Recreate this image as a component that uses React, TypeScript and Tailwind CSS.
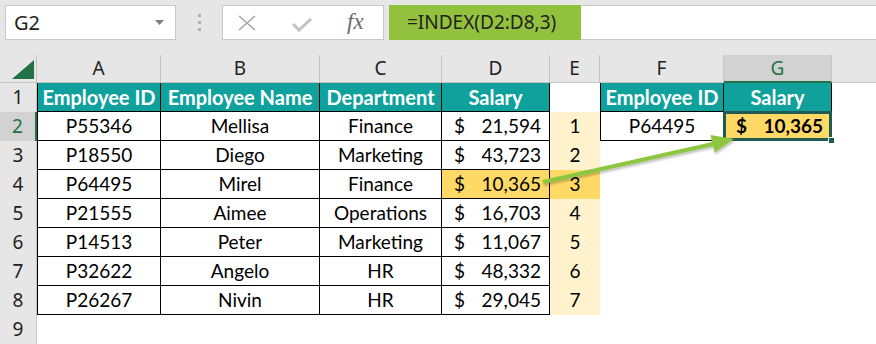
import React from 'react';

const cellFont = "font-['Lato','Liberation_Sans',sans-serif]";
const uiFont = "font-['Noto_Sans','Open_Sans',sans-serif]";

const cols = ['A', 'B', 'C', 'D', 'E', 'F', 'G'];

const rows = [
  { id: 'P55346', name: 'Mellisa', dept: 'Finance', salary: '21,594' },
  { id: 'P18550', name: 'Diego', dept: 'Marketing', salary: '43,723' },
  { id: 'P64495', name: 'Mirel', dept: 'Finance', salary: '10,365' },
  { id: 'P21555', name: 'Aimee', dept: 'Operations', salary: '16,703' },
  { id: 'P14513', name: 'Peter', dept: 'Marketing', salary: '11,067' },
  { id: 'P32622', name: 'Angelo', dept: 'HR', salary: '48,332' },
  { id: 'P26267', name: 'Nivin', dept: 'HR', salary: '29,045' },
];

const head = 'bg-[#10a19d] text-white font-bold text-[20px] border-r border-b border-black flex items-center justify-center';

const RowHead = ({ n, active }: { n: number; active?: boolean }) => (
  <div
    className={
      active
        ? `flex items-center justify-center bg-[#d2d2d2] text-[#217346] border-r-2 border-[#217346] text-[19px] ${uiFont}`
        : `flex items-center justify-center bg-[#e6e6e6] text-[#222] border-r border-[#c4c4c4] text-[19px] ${uiFont}`
    }
  >
    {n}
  </div>
);

const Money = ({ value, bold }: { value: string; bold?: boolean }) => (
  <div className={`flex h-full items-center justify-between pl-[12px] pr-[8px] ${bold ? 'font-bold' : ''}`}>
    <span>$</span>
    <span>{value}</span>
  </div>
);

export default function App() {
  return (
    <div className="w-[876px] h-[344px] bg-white overflow-hidden relative">
      {/* formula bar */}
      <div className="h-[55px] bg-[#e6e6e6] flex items-start pt-[5px] pl-[5px]">
        <div className="w-[171px] h-[35px] bg-white border border-[#c6c6c6] flex items-center justify-between pl-[8px] pr-[11px]">
          <span className={`text-[20px] text-[#222] ${uiFont}`}>G2</span>
          <svg width="9" height="5" viewBox="0 0 9 5">
            <path d="M0 0 L9 0 L4.5 5 Z" fill="#808080" />
          </svg>
        </div>
        <div className="w-[46px] h-[35px] flex flex-col items-center justify-center gap-[4px]">
          <span className="w-[3px] h-[3px] bg-[#b0b0b0]" />
          <span className="w-[3px] h-[3px] bg-[#b0b0b0]" />
          <span className="w-[3px] h-[3px] bg-[#b0b0b0]" />
        </div>
        <div className="w-[162px] h-[35px] bg-white border border-[#c6c6c6] flex items-center pl-[14px]">
          <svg width="20" height="16" viewBox="0 0 20 16">
            <path d="M2 1 L18 15 M18 1 L2 15" stroke="#a6a6a6" strokeWidth="1.6" />
          </svg>
          <svg className="ml-[35px] mt-[4px]" width="20" height="14" viewBox="0 0 20 14">
            <path d="M1 6 L7 12 L19 1" stroke="#c2c2c2" strokeWidth="3" fill="none" />
          </svg>
          <span className="ml-[35px] text-[23px] italic text-[#6b6b6b] font-['Liberation_Serif',serif]">fx</span>
        </div>
        <div className="flex-1 h-[35px] ml-[5px] flex bg-white border-y border-[#c6c6c6]">
          <div className={`w-[192px] -my-px h-[35px] bg-[#92c13d] flex items-center pl-[18px] text-[19px] text-[#222] ${uiFont}`}>
            =INDEX(D2:D8,3)
          </div>
        </div>
      </div>

      {/* sheet */}
      <div className={`grid grid-cols-[37px_124px_159px_122px_108px_50px_124px_108px_1fr] grid-rows-[28px_repeat(9,29px)] text-[19px] text-black ${cellFont}`}>
        {/* column headers */}
        <div className="bg-[#e6e6e6] border-r border-b border-[#c4c4c4] flex items-end justify-start pl-[12px] pb-[3px]">
          <svg width="22" height="19" viewBox="0 0 22 19">
            <path d="M22 0 L22 19 L0 19 Z" fill="#217346" />
          </svg>
        </div>
        {cols.map((c) =>
          c === 'G' ? (
            <div key={c} className={`bg-[#d2d2d2] text-[#217346] border-r border-[#c4c4c4] border-b-2 border-b-[#217346] flex items-center justify-center text-[19px] ${uiFont}`}>
              {c}
            </div>
          ) : (
            <div key={c} className={`bg-[#e6e6e6] text-[#222] border-r border-b border-[#c4c4c4] flex items-center justify-center text-[19px] ${uiFont}`}>
              {c}
            </div>
          )
        )}
        <div className="bg-[#e6e6e6] border-b border-[#c4c4c4]" />

        {/* row 1 */}
        <RowHead n={1} />
        <div className={`${head} border-l`}>Employee ID</div>
        <div className={head}>Employee Name</div>
        <div className={head}>Department</div>
        <div className={head}>Salary</div>
        <div />
        <div className={`${head} border-l`}>Employee ID</div>
        <div className={head}>Salary</div>
        <div />

        {/* rows 2-8 */}
        {rows.map((r, i) => (
          <React.Fragment key={r.id}>
            <RowHead n={i + 2} active={i === 0} />
            <div className="border-l border-r border-b border-black flex items-center justify-center">{r.id}</div>
            <div className="border-r border-b border-black flex items-center justify-center">{r.name}</div>
            <div className="border-r border-b border-black flex items-center justify-center">{r.dept}</div>
            <div className={`border-r border-b border-black ${i === 2 ? 'bg-[#ffd966]' : ''}`}>
              <Money value={r.salary} />
            </div>
            <div className={`flex items-center justify-center ${i === 2 ? 'bg-[#ffd966]' : 'bg-[#fff2cc]'}`}>{i + 1}</div>
            {i === 0 ? (
              <>
                <div className="border-l border-r border-b border-black flex items-center justify-center">P64495</div>
                <div className="relative bg-[#ffd966] border-r border-b border-black">
                  <Money value="10,365" bold />
                  <span className="absolute -left-px -top-px -right-px -bottom-px border-[3px] border-[#1f5b50]" />
                  <span className="absolute -right-[4px] -bottom-[4px] w-[7px] h-[7px] bg-[#1f5b50] border border-white" />
                </div>
              </>
            ) : (
              <>
                <div />
                <div />
              </>
            )}
            <div />
          </React.Fragment>
        ))}

        {/* row 9 */}
        <RowHead n={9} />
        <div className="col-span-8" />
      </div>

      {/* arrow */}
      <svg className="absolute left-0 top-0 pointer-events-none" width="876" height="344" viewBox="0 0 876 344">
        <defs>
          <filter id="sh" x="-10%" y="-50%" width="120%" height="200%">
            <feDropShadow dx="1" dy="2" stdDeviation="1.2" floodColor="#000" floodOpacity="0.25" />
          </filter>
        </defs>
        <g filter="url(#sh)">
          <line x1="543" y1="182" x2="715" y2="143.5" stroke="#8dc63f" strokeWidth="4" />
          <polygon points="734,139 714.5,152.6 710.5,135" fill="#8dc63f" />
        </g>
      </svg>
    </div>
  );
}
